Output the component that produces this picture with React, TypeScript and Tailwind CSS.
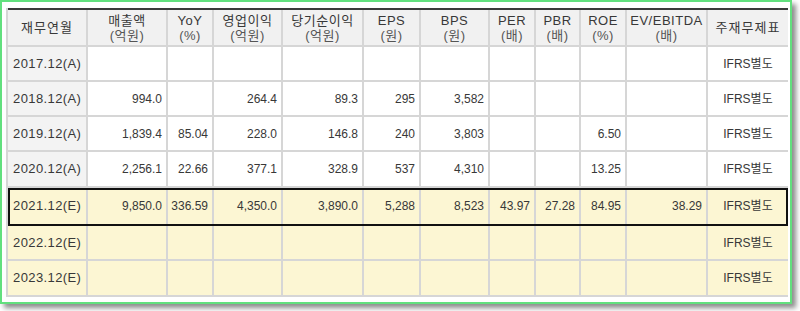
import React from 'react';

const widths = [
  'w-[80px]',
  'w-[80px]',
  'w-[46px]',
  'w-[69px]',
  'w-[81px]',
  'w-[57px]',
  'w-[69px]',
  'w-[46px]',
  'w-[45px]',
  'w-[46px]',
  'w-[81px]',
  'w-[80px]',
];

const headers: { title: string; unit?: string }[] = [
  { title: '재무연월' },
  { title: '매출액', unit: '(억원)' },
  { title: 'YoY', unit: '(%)' },
  { title: '영업이익', unit: '(억원)' },
  { title: '당기순이익', unit: '(억원)' },
  { title: 'EPS', unit: '(원)' },
  { title: 'BPS', unit: '(원)' },
  { title: 'PER', unit: '(배)' },
  { title: 'PBR', unit: '(배)' },
  { title: 'ROE', unit: '(%)' },
  { title: 'EV/EBITDA', unit: '(배)' },
  { title: '주재무제표' },
];

interface Row {
  period: string;
  values: string[];
  estimate: boolean;
  highlight?: boolean;
  height: string;
}

const rows: Row[] = [
  { period: '2017.12(A)', values: ['', '', '', '', '', '', '', '', '', ''], estimate: false, height: 'h-[35px]' },
  { period: '2018.12(A)', values: ['994.0', '', '264.4', '89.3', '295', '3,582', '', '', '', ''], estimate: false, height: 'h-[35px]' },
  { period: '2019.12(A)', values: ['1,839.4', '85.04', '228.0', '146.8', '240', '3,803', '', '', '6.50', ''], estimate: false, height: 'h-[35px]' },
  { period: '2020.12(A)', values: ['2,256.1', '22.66', '377.1', '328.9', '537', '4,310', '', '', '13.25', ''], estimate: false, height: 'h-[36px]' },
  {
    period: '2021.12(E)',
    values: ['9,850.0', '336.59', '4,350.0', '3,890.0', '5,288', '8,523', '43.97', '27.28', '84.95', '38.29'],
    estimate: true,
    highlight: true,
    height: 'h-[38px]',
  },
  { period: '2022.12(E)', values: ['', '', '', '', '', '', '', '', '', ''], estimate: true, height: 'h-[35px]' },
  { period: '2023.12(E)', values: ['', '', '', '', '', '', '', '', '', ''], estimate: true, height: 'h-[36px]' },
];

const font = "font-['Liberation_Sans','Noto_Sans_CJK_KR',sans-serif]";

export default function App() {
  return (
    <div className={`bg-white w-[800px] h-[311px] ${font} text-[#383838]`}>
      <div className="w-[792px] h-[304px] border-2 border-[#62e07e] bg-white pl-1 pt-1.5 shadow-[4px_4px_5px_rgba(0,0,0,0.45)]">
        <div className="w-[782px] border-l-2 border-[#d6d6d6]">
          {/* header */}
          <div className="flex h-[39px] border-t-2 border-[#3a3a3a] bg-[#f1f1f1]">
            {headers.map((h, i) => (
              <div
                key={h.title}
                className={`${widths[i]} flex flex-col items-center justify-center border-b-2 border-[#d6d6d6] text-[13px] leading-[15px] ${
                  i < 11 ? 'border-r-2' : ''
                }`}
              >
                <span className={h.unit ? 'tracking-[0.5px]' : 'tracking-[1px]'}>{h.title}</span>
                {h.unit && <span className="text-[#555] tracking-[0.5px]">{h.unit}</span>}
              </div>
            ))}
          </div>

          {rows.map(r => (
            <div
              key={r.period}
              className={`flex ${r.height} ${r.estimate ? 'bg-[#fcf6d3]' : 'bg-white'} ${
                r.highlight ? 'relative outline-2 outline-[#111] -outline-offset-2' : ''
              }`}
            >
              <div
                className={`${widths[0]} flex items-center pl-[5px] border-r-2 border-b-2 border-[#d6d6d6] text-[13px] tracking-[0.4px] ${
                  r.estimate ? '' : 'bg-[#f3f3f3]'
                }`}
              >
                {r.period}
              </div>
              {r.values.map((v, i) => (
                <div
                  key={i}
                  className={`${widths[i + 1]} flex items-center justify-end pr-[4px] border-r-2 border-b-2 border-[#d6d6d6] text-[12px]`}
                >
                  {v}
                </div>
              ))}
              <div className={`${widths[11]} flex items-center justify-center border-b-2 border-[#d6d6d6] text-[12px]`}>
                IFRS별도
              </div>
            </div>
          ))}
        </div>
      </div>
    </div>
  );
}
